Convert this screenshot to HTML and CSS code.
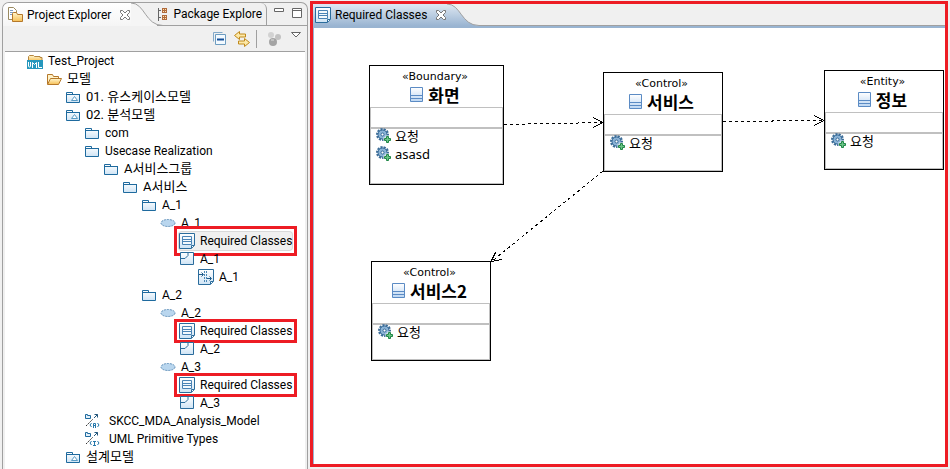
FILE: index.html
```html
<!DOCTYPE html>
<html lang="ko">
<head>
<meta charset="utf-8">
<title>Project Explorer</title>
<link rel="stylesheet" href="styles.css">
</head>
<body>
<svg class="defs" aria-hidden="true">
  <defs>
    <linearGradient id="g-blue" x1="0" y1="0" x2="0" y2="1"><stop offset="0" stop-color="#fff"/><stop offset="1" stop-color="#cfe4f5"/></linearGradient>
    <linearGradient id="g-gold" x1="0" y1="0" x2="0" y2="1"><stop offset="0" stop-color="#fff6cf"/><stop offset="1" stop-color="#f6bf55"/></linearGradient>
    <linearGradient id="g-class" x1="0" y1="0" x2="0" y2="1"><stop offset="0" stop-color="#fff"/><stop offset="1" stop-color="#bcd6f2"/></linearGradient>
    <linearGradient id="g-tab" x1="0" y1="0" x2="0" y2="1"><stop offset="0" stop-color="#dfe8f2"/><stop offset="1" stop-color="#99b4d1"/></linearGradient>
    <symbol id="i-folder" viewBox="0 0 16 16"><path d="M1.500 3.500h6v2h7v8h-13z" fill="url(#g-blue)" stroke="#1e6a9e"/><path d="M1 5.500h14" stroke="#1e6a9e"/></symbol>
    <symbol id="i-model" viewBox="0 0 16 16"><path d="M1.500 3.500h6v2h7v8h-13z" fill="url(#g-blue)" stroke="#1e6a9e"/><path d="M1 5.500h14" stroke="#1e6a9e"/><path d="M9.500 7.500l3 4H6.500z" fill="#fff" stroke="#5a9bc4"/></symbol>
    <symbol id="i-open" viewBox="0 0 16 16"><path d="M1.500 13V3.500h5l1 2h5V8" fill="#fff3c9" stroke="#b5782a"/><path d="M1.500 13.500L4.500 7.500h11l-3 6z" fill="url(#g-gold)" stroke="#b5782a"/></symbol>
    <symbol id="i-uml" viewBox="0 0 16 16"><path d="M1.500 8V3.500l1-1h4l1 1h5.500v1h2V8" fill="url(#g-gold)" stroke="#b5863f"/><path d="M0 7h16v9H0z" fill="#2597bd"/><path d="M1.500 9v4q0 1 1 1t1-1V9M5.500 15V9.500l2 2 2-2V15M11.500 9v5.500H15" fill="none" stroke="#fff"/></symbol>
    <symbol id="i-case" viewBox="0 0 16 16"><ellipse cx="8" cy="8" rx="7" ry="3.500" fill="#b9d6ee" stroke="#5b8db8" stroke-dasharray="2 1"/></symbol>
    <symbol id="i-classes" viewBox="0 0 16 16"><path d="M.5.500h15v12l-3 3H.5z" fill="url(#g-blue)" stroke="#2a6c9c"/><path d="M12.500 15v-2.500H15" fill="#fff" stroke="#2a6c9c"/><path d="M3.500 3.500h9v8h-9zM4 6.500h8M4 8.500h8" fill="#f4f9fd" stroke="#4a83b5"/></symbol>
    <symbol id="i-collab" viewBox="0 0 16 16"><path d="M1.500 1.500h13v12h-13z" fill="url(#g-blue)" stroke="#2a6c9c"/><path d="M2 7.500h4l3-3V2" fill="none" stroke="#2a6c9c"/></symbol>
    <symbol id="i-seq" viewBox="0 0 16 16"><path d="M.5.500h15v12l-3 3H.5z" fill="url(#g-blue)" stroke="#2a6c9c"/><path d="M12.500 15v-2.500H15" fill="#fff" stroke="#2a6c9c"/><path d="M6.500 2v12M8.500 2v12" stroke="#4a87b5" stroke-dasharray="2 1"/><path d="M1 5.500h4M3.500 3.500l2 2-2 2M9 9.500h4M11.500 7.500l2 2-2 2" fill="none" stroke="#1e5b8a"/></symbol>
    <symbol id="i-lib" viewBox="0 0 16 16"><path d="M1.500 1.500h2v1h3v3h-5z" fill="#e3f0fa" stroke="#1e6a9e"/><path d="M2 13l7-7" stroke="#333" stroke-dasharray="2 1"/><path d="M10.500 1.500h3v3M13.500 1.500L10 5" fill="none" stroke="#24577c"/><path d="M7.500 10l-1.500 2 1.500 2M13.500 10l1.500 2-1.500 2" fill="none" stroke="#2577aa"/></symbol>
    <symbol id="i-libA" viewBox="0 0 16 16"><use href="#i-lib"/><path d="M9.500 15v-4.500h2V15M9 12.500h3" fill="none" stroke="#2577aa"/></symbol>
    <symbol id="i-libI" viewBox="0 0 16 16"><use href="#i-lib"/><path d="M9 10.500h3M10.500 10v4M9 14.500h3" fill="none" stroke="#2577aa"/></symbol>
    <symbol id="i-close" viewBox="0 0 12 12"><path d="M1.500 1.500h2l2.500 2.500 2.500-2.500h2v2L8 6l2.500 2.500v2h-2L6 8l-2.500 2.500h-2v-2L4 6 1.500 3.500z" fill="#fff" stroke="#777"/></symbol>
    <symbol id="i-explorer" viewBox="0 0 16 16"><path d="M1.500.500h5l3 3v9h-8z" fill="#fff" stroke="#9a8a60"/><path d="M3 3.500h3M3 5.500h4M3 7.500h3" stroke="#7f9ec4"/><path d="M5.500 14.500v-8l1-1h3l1 2h5v7z" fill="url(#g-gold)" stroke="#b5782a"/></symbol>
    <symbol id="i-package" viewBox="0 0 16 16"><path d="M1.500 2v13M2 4.500h2M2 11.500h2" stroke="#666" fill="none"/><path d="M5 2h5v5H5zM5 9h5v5H5z" fill="#b06a3c"/><path d="M6 3h1v1H6zm2 0h1v1H8zM6 5h1v1H6zm2 0h1v1H8zM6 10h1v1H6zm2 0h1v1H8zM6 12h1v1H6zm2 0h1v1H8z" fill="#ffe3b0"/></symbol>
    <symbol id="i-collapse" viewBox="0 0 16 16"><path d="M1.500 10.500v-9h9" fill="none" stroke="#82a9c9"/><path d="M3.500 3.500h10v10h-10z" fill="#f3faff" stroke="#6d9cc0"/><path d="M5 8.500h7" stroke="#14509a" stroke-width="2"/></symbol>
    <symbol id="i-link" viewBox="0 0 16 16"><path d="M5.500.500v2.500h6v3h-6v2.500L.5 4.500zM10.500 7.500V10h-6v3h6v2.500l5-4z" fill="#fde9a8" stroke="#c08a1c"/></symbol>
    <symbol id="i-focus" viewBox="0 0 16 16"><circle cx="4" cy="4" r="3" fill="#d2d2d2"/><circle cx="11" cy="6" r="3" fill="#c2c2c2"/><circle cx="6" cy="11" r="4" fill="#a4a4a4"/><path d="M4 9h3" stroke="#ddd"/></symbol>
    <symbol id="i-class" viewBox="0 0 14 16"><path d="M.5.500h12v14H.5z" fill="url(#g-class)" stroke="#5b8bc4"/><path d="M1 8.500h11M1 11.500h11" stroke="#5b8bc4"/></symbol>
    <symbol id="i-op" viewBox="0 0 16 16"><circle cx="6.500" cy="6.500" r="5" fill="none" stroke="#3d6d98" stroke-width="3" stroke-dasharray="2 1"/><circle cx="6.500" cy="6.500" r="4.500" fill="#8bb3d6" stroke="#356a98"/><circle cx="6.500" cy="6.500" r="1.500" fill="#fff" stroke="#356a98"/><path d="M9.500 7.500h4v2h2v4h-2v2h-4v-2h-2v-4h2z" fill="#fff"/><path d="M10.500 8.500h2v2h2v2h-2v2h-2v-2h-2v-2h2z" fill="#6cc487" stroke="#1f8746"/></symbol>
  </defs>
</svg>
<div class="workbench">
  <aside class="explorer">
    <div class="tabs">
      <button class="tab"><svg class="icon"><use href="#i-explorer"/></svg>Project Explorer<svg class="close"><use href="#i-close"/></svg></button>
      <svg class="curve" viewBox="0 0 32 23"><path d="M0 0C14 0 14 22 32 22.500V23H0z" fill="#f5f5f5"/><path d="M0 0C14 0 14 22.500 32 22.500" fill="none" stroke="#a0a0a0"/></svg>
      <button class="tab second"><svg class="icon"><use href="#i-package"/></svg>Package Explore</button>
      <div class="window-buttons">
        <button aria-label="Minimize"><svg width="10" height="12"><path d="M.5 1.500h9v3h-9z" fill="#fff" stroke="#666"/></svg></button>
        <button aria-label="Maximize"><svg width="10" height="12"><path d="M.5 1.500h9v9h-9zM1 3.500h8" fill="#fff" stroke="#666"/></svg></button>
      </div>
    </div>
    <div class="toolbar">
      <button aria-label="Collapse all"><svg class="icon"><use href="#i-collapse"/></svg></button>
      <button aria-label="Link with editor"><svg class="icon"><use href="#i-link"/></svg></button>
      <span class="separator"></span>
      <button aria-label="Focus" disabled><svg class="icon"><use href="#i-focus"/></svg></button>
      <button class="menu" aria-label="View menu"><svg width="10" height="6"><path d="M.5.500h9L5 5z" fill="#fff" stroke="#666"/></svg></button>
    </div>
    <ul class="tree">
      <li><span class="row"><svg class="icon"><use href="#i-uml"/></svg>Test_Project</span>
        <ul>
          <li><span class="row korean"><svg class="icon"><use href="#i-open"/></svg>모델</span>
            <ul>
              <li><span class="row korean"><svg class="icon"><use href="#i-model"/></svg>01. 유스케이스모델</span></li>
              <li><span class="row korean"><svg class="icon"><use href="#i-model"/></svg>02. 분석모델</span>
                <ul>
                  <li><span class="row"><svg class="icon"><use href="#i-folder"/></svg>com</span></li>
                  <li><span class="row"><svg class="icon"><use href="#i-folder"/></svg>Usecase Realization</span>
                    <ul>
                      <li><span class="row korean"><svg class="icon"><use href="#i-folder"/></svg>A서비스그룹</span>
                        <ul>
                          <li><span class="row korean"><svg class="icon"><use href="#i-folder"/></svg>A서비스</span>
                            <ul>
                              <li><span class="row"><svg class="icon"><use href="#i-folder"/></svg>A_1</span>
                                <ul>
                                  <li><span class="row"><svg class="icon"><use href="#i-case"/></svg>A_1</span>
                                    <ul>
                                      <li><span class="row marked selected"><svg class="icon"><use href="#i-classes"/></svg>Required Classes</span></li>
                                      <li><span class="row"><svg class="icon"><use href="#i-collab"/></svg>A_1</span>
                                        <ul><li><span class="row"><svg class="icon"><use href="#i-seq"/></svg>A_1</span></li></ul>
                                      </li>
                                    </ul>
                                  </li>
                                </ul>
                              </li>
                              <li><span class="row"><svg class="icon"><use href="#i-folder"/></svg>A_2</span>
                                <ul>
                                  <li><span class="row"><svg class="icon"><use href="#i-case"/></svg>A_2</span>
                                    <ul>
                                      <li><span class="row marked"><svg class="icon"><use href="#i-classes"/></svg>Required Classes</span></li>
                                      <li><span class="row"><svg class="icon"><use href="#i-collab"/></svg>A_2</span></li>
                                    </ul>
                                  </li>
                                  <li><span class="row"><svg class="icon"><use href="#i-case"/></svg>A_3</span>
                                    <ul>
                                      <li><span class="row marked"><svg class="icon"><use href="#i-classes"/></svg>Required Classes</span></li>
                                      <li><span class="row"><svg class="icon"><use href="#i-collab"/></svg>A_3</span></li>
                                    </ul>
                                  </li>
                                </ul>
                              </li>
                            </ul>
                          </li>
                        </ul>
                      </li>
                    </ul>
                  </li>
                  <li><span class="row library"><svg class="icon"><use href="#i-libA"/></svg>SKCC_MDA_Analysis_Model</span></li>
                  <li><span class="row library"><svg class="icon"><use href="#i-libI"/></svg>UML Primitive Types</span></li>
                </ul>
              </li>
              <li><span class="row korean"><svg class="icon"><use href="#i-model"/></svg>설계모델</span></li>
            </ul>
          </li>
        </ul>
      </li>
    </ul>
  </aside>
  <main class="editor">
    <div class="editor-tabs">
      <button class="tab"><svg class="icon"><use href="#i-classes"/></svg>Required Classes<svg class="close"><use href="#i-close"/></svg></button>
      <svg class="curve" viewBox="0 0 32 22"><path d="M0 0C14 0 14 21 32 21.500V22H0z" fill="url(#g-tab)"/><path d="M0 0C14 0 14 21.500 32 21.500" fill="none" stroke="#a0a0a0"/></svg>
      <div class="rest"></div>
    </div>
    <div class="canvas">
      <svg class="links" aria-hidden="true">
        <g stroke="#000" fill="none" shape-rendering="crispEdges">
          <path class="dash" d="M190 96.500L289 94.500M409 93.500L510 92.500M289 143L177 234"/>
          <path d="M279 89.500L289 94.500L279 99.500M500 87.500L510 92.500L500 97.500M181.500 224.500L177 233.500L188 231.500"/>
        </g>
      </svg>
      <section class="node boundary"><header><span>«Boundary»</span><h2><svg class="kind"><use href="#i-class"/></svg>화면</h2></header><div class="attributes"></div><ul><li><svg class="icon"><use href="#i-op"/></svg>요청</li><li><svg class="icon"><use href="#i-op"/></svg>asasd</li></ul></section>
      <section class="node service"><header><span>«Control»</span><h2><svg class="kind"><use href="#i-class"/></svg>서비스</h2></header><div class="attributes"></div><ul><li><svg class="icon"><use href="#i-op"/></svg>요청</li></ul></section>
      <section class="node entity"><header><span>«Entity»</span><h2><svg class="kind"><use href="#i-class"/></svg>정보</h2></header><div class="attributes"></div><ul><li><svg class="icon"><use href="#i-op"/></svg>요청</li></ul></section>
      <section class="node service2"><header><span>«Control»</span><h2><svg class="kind"><use href="#i-class"/></svg>서비스2</h2></header><div class="attributes"></div><ul><li><svg class="icon"><use href="#i-op"/></svg>요청</li></ul></section>
    </div>
  </main>
</div>
</body>
</html>
```
FILE: styles.css
```css
* { box-sizing: border-box; }
body {
  margin: 0;
  background: #f0f0f0;
  color: #000;
  font: 12px/18px Roboto, "Noto Sans CJK KR", sans-serif;
}
button {
  padding: 0;
  border: 0;
  background: none;
  color: inherit;
  font: inherit;
}
svg { display: block; flex: none; }
ul { margin: 0; padding: 0; list-style: none; }
.defs { position: absolute; width: 0; height: 0; }
.icon { width: 16px; height: 16px; }
.close { width: 12px; height: 12px; }

.workbench {
  display: flex;
  gap: 2px;
  height: 100vh;
  overflow: hidden;
}

/* Explorer view */
.explorer {
  display: flex;
  flex: none;
  flex-direction: column;
  width: 306px;
  margin: 2px 0 0 2px;
  border: 1px solid #a0a0a0;
  border-bottom: 0;
  border-radius: 7px 7px 0 0;
}
.tabs { display: flex; height: 23px; }
.tab { display: flex; align-items: center; white-space: nowrap; }
.tabs .tab:first-child {
  gap: 4px;
  padding-left: 4px;
  border-radius: 6px 0 0 0;
  background: linear-gradient(#fff, #f5f5f5);
}
.tab .close { margin-left: 4px; }
.curve { width: 32px; height: 100%; }
.tabs .curve { margin-right: -6px; }
.tabs .second {
  flex: none;
  padding-right: 4px;
  border-right: 1px solid #a0a0a0;
  border-bottom: 1px solid #a0a0a0;
  border-top-right-radius: 6px;
}
.window-buttons {
  display: flex;
  flex: 1;
  gap: 8px;
  align-items: flex-start;
  justify-content: flex-end;
  padding: 4px 5px 0 0;
  border-bottom: 1px solid #a0a0a0;
}
.toolbar {
  display: flex;
  gap: 6px;
  align-items: center;
  justify-content: flex-end;
  height: 26px;
  margin: 0 2px;
  padding-right: 4px;
  border-bottom: 1px solid #a0a0a0;
}
.separator { width: 1px; height: 18px; margin-right: 4px; background: #a0a0a0; }
.menu { align-self: flex-start; padding: 6px 0 0 2px; }
.tree {
  flex: 1;
  margin: 0 2px;
  padding-left: 22px;
  background: #fff;
}
.tree ul { padding-left: 19px; }
.row {
  display: flex;
  position: relative;
  gap: 5px;
  align-items: center;
  width: max-content;
  height: 18px;
  white-space: nowrap;
}
.korean { font-size: 13px; }
.library { gap: 9px; }
.marked::after {
  position: absolute;
  inset: -3px -5px;
  border: 3px solid #ed1c24;
  content: "";
}
.selected { border-radius: 3px; background: #f0f0f0; box-shadow: 0 0 0 1px #d9d9d9; }
.selected::after { inset: -6px -5px; }

/* Diagram editor */
.editor {
  display: flex;
  flex: 1;
  flex-direction: column;
  min-width: 0;
  margin: 1px 2px 2px 0;
  border: 3px solid #ed1c24;
}
.editor-tabs { display: flex; height: 24px; border-bottom: 2px solid #99b4d1; }
.editor-tabs .tab {
  gap: 4px;
  padding-left: 2px;
  background: linear-gradient(#dfe8f2, #99b4d1);
}
.rest { flex: 1; border-bottom: 1px solid #a0a0a0; }
.canvas {
  position: relative;
  flex: 1;
  overflow: hidden;
  border-left: 1px solid #99b4d1;
  background: #fff;
}
.links { position: absolute; width: 100%; height: 100%; }
.dash { stroke-dasharray: 3 3; }
.node {
  display: flex;
  position: absolute;
  flex-direction: column;
  width: 120px;
  height: 100px;
  border: 1px solid #000;
  background: #fff;
}
.boundary { top: 37px; left: 55px; width: 135px; height: 120px; }
.service { top: 44px; left: 289px; }
.entity { top: 42px; left: 510px; }
.service2 { top: 233px; left: 57px; }
.node header {
  height: 41px;
  padding: 3px 3px 0 0;
  font: 11px/16px "DejaVu Sans", sans-serif;
  text-align: center;
}
.node h2 {
  display: flex;
  gap: 4px;
  align-items: center;
  justify-content: center;
  margin: 0;
  font: bold 17px/20px "Noto Sans CJK KR", sans-serif;
}
.kind { width: 14px; height: 16px; }
.attributes { height: 21px; border: 1px solid #c0c0c0; }
.node ul {
  flex: 1;
  border: 1px solid #c0c0c0;
}
.node li {
  display: flex;
  gap: 3px;
  align-items: center;
  height: 18px;
  padding-left: 5px;
  font: 13px/18px "Noto Sans", "Noto Sans CJK KR", sans-serif;
}
.node li:first-child { margin-top: -2px; }
```
